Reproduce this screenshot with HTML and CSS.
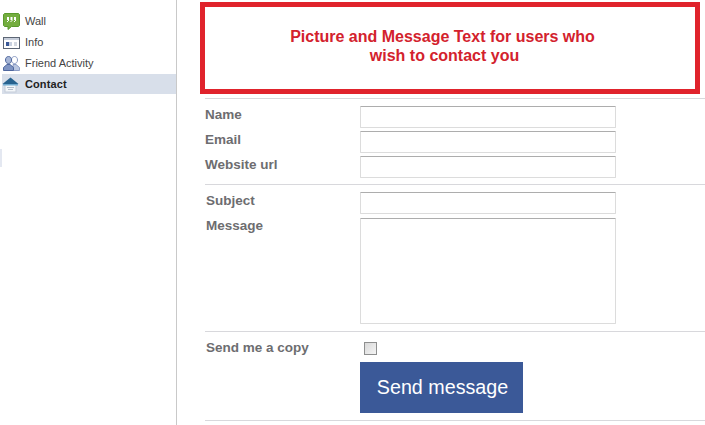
FILE: index.html
```html
<!DOCTYPE html>
<html lang="en">
  <head>
    <meta charset="UTF-8" />
    <meta name="viewport" content="width=device-width, initial-scale=1.0" />
    <title>Contact</title>
    <link rel="stylesheet" href="styles.css">
  </head>
  <body>
    <div class="page">
      <!-- Left navigation -->
      <div class="sidebar">
        <div class="nav-item">
          <svg class="nav-icon" viewBox="0 0 17 17">
            <path d="M1.500 0.500h14l1 1v11l-1 1h-7l-3.500 3v-3h-3.500l-1-1v-11z" fill="#74ad3f" stroke="#5a9a2c" />
            <path d="M4 4h2v3h-2zM7.500 4h2v3h-2zM11 4h2v3h-2z" fill="#fff" />
            <path d="M4 9l2-2M7.500 9l2-2M11 9l2-2" stroke="#fff" />
          </svg>
          <span>Wall</span>
        </div>
        <div class="nav-item">
          <svg class="nav-icon" viewBox="0 0 17 17">
            <rect x="0.500" y="3.500" width="16" height="11" fill="#fff" stroke="#5d6675" />
            <rect x="1" y="4" width="15" height="2" fill="#c7cedb" />
            <rect x="3" y="8" width="3" height="4" fill="#3b5998" />
            <rect x="6" y="8" width="3" height="4" fill="#c9d1e0" />
            <path d="M11 9h3M11 11h3" stroke="#a8b1c2" />
          </svg>
          <span>Info</span>
        </div>
        <div class="nav-item">
          <svg class="nav-icon" viewBox="0 0 17 17">
            <path d="M11.500 1.500c2 0 3 1.500 3 3.500s-1 3.500-3 3.500-3-1.500-3-3.500 1-3.500 3-3.500z" fill="#fff" stroke="#8a9bc4" />
            <path d="M10 9.500h3l3.500 3v3h-6z" fill="#b9c6e0" stroke="#8a9bc4" />
            <path d="M5.500 1.500c2 0 3 1.500 3 3.500s-1 3.500-3 3.500-3-1.500-3-3.500 1-3.500 3-3.500z" fill="#a7b6d6" stroke="#4f679e" />
            <path d="M4 9.500h3l3.500 3v3h-10v-3z" fill="#7f94c2" stroke="#4f679e" />
          </svg>
          <span>Friend Activity</span>
        </div>
        <div class="nav-item active">
          <svg class="nav-icon" viewBox="0 0 17 17">
            <rect x="3" y="8" width="11" height="8" fill="#f3f6f9" stroke="#c3ccd8" />
            <path d="M0.500 8l8-6.500 8 6.500z" fill="#27628f" />
            <rect x="1" y="8" width="15" height="1.500" fill="#6fa9cf" />
            <path d="M5 11.500h7M6 13.500h5" stroke="#b2bdcb" />
          </svg>
          <span>Contact</span>
        </div>
        <div class="side-mark"></div>
      </div>

      <div class="main">
        <div class="promo">
          <p>Picture and Message Text for users who<br /><span class="promo-second">wish to contact you</span></p>
        </div>

        <form class="contact-form">
          <div class="form-group first">
            <div class="form-row">
              <label>Name</label>
              <input class="field" type="text" />
            </div>
            <div class="form-row">
              <label>Email</label>
              <input class="field" type="text" />
            </div>
            <div class="form-row">
              <label>Website url</label>
              <input class="field" type="text" />
            </div>
          </div>

          <div class="form-group second">
            <div class="form-row subject-row">
              <label class="shifted">Subject</label>
              <input class="field" type="text" />
            </div>
            <div class="form-row message-row">
              <label class="shifted">Message</label>
              <textarea class="field message"></textarea>
            </div>
          </div>

          <div class="form-group third">
            <div class="form-row copy-row">
              <label class="shifted">Send me a copy</label>
              <span class="checkbox"></span>
            </div>
            <button class="send" type="button">Send message</button>
          </div>
        </form>
      </div>
    </div>
  </body>
</html>
```

FILE: styles.css
```css
* {
  box-sizing: border-box;
}

body {
  margin: 0;
  background: #fff;
  font-family: "Liberation Sans", Arial, sans-serif;
  overflow: hidden;
}

.page {
  display: flex;
  height: 425px;
}

.sidebar {
  width: 177px;
  flex-shrink: 0;
  padding: 11px 0 0 2px;
  border-right: 1px solid #c9c9c9;
}

.nav-item {
  display: flex;
  align-items: center;
  gap: 5px;
  height: 21px;
  padding-left: 1px;
  font-size: 11px;
  color: #444;
}

.nav-item span {
  margin-top: -2px;
}

.nav-item.active {
  height: 20px;
  padding-left: 0;
  gap: 6px;
  background: #d8dfea;
  font-weight: bold;
  letter-spacing: 0.1px;
  color: #222;
}

.nav-item.active span {
  margin-top: -1px;
}

.nav-icon {
  width: 17px;
  height: 17px;
  flex-shrink: 0;
  margin-top: -1px;
}

.nav-item.active .nav-icon {
  margin-top: 0;
}

.side-mark {
  width: 2px;
  height: 18px;
  margin: 55px 0 0 -2px;
  background: #e4e8f1;
}

.main {
  flex: 1;
  padding: 2px 0 0 23px;
}

.promo {
  display: flex;
  align-items: center;
  justify-content: center;
  width: 500px;
  height: 92px;
  padding: 0 15px 5px 0;
  border: 5px solid #e0232c;
}

.promo p {
  margin: 0;
  text-align: center;
  font-size: 16px;
  line-height: 19px;
  font-weight: bold;
  color: #d3222d;
}

.promo-second {
  padding-left: 4px;
}

.contact-form {
  margin-left: 5px;
}

.form-group {
  border-bottom: 1px solid #d8d8dc;
}

.form-group.first {
  margin-top: 4px;
  padding: 0 0 3px;
  border-top: 1px solid #d8d8dc;
}

.form-group.first .form-row:first-child {
  margin-top: 7px;
}

.form-group.second {
  padding: 7px 0 4px;
}

.form-group.third {
  padding: 6px 0 7px;
}

.form-row {
  display: flex;
  align-items: flex-start;
  margin-bottom: 3px;
}

.subject-row {
  margin-bottom: 4px;
}

.form-row label {
  width: 155px;
  padding-top: 1px;
  font-size: 13.500px;
  line-height: 16px;
  font-weight: bold;
  color: #6d6d70;
}

.form-row label.shifted {
  width: 154px;
  margin-left: 1px;
}

.message-row label {
  padding-top: 0;
}

.field {
  display: block;
  width: 256px;
  height: 22px;
  margin: 0;
  padding: 0;
  background: #fff;
  border: 1px solid #dcdcdc;
  border-top-color: #adadad;
  border-radius: 1px;
  outline: none;
  resize: none;
}

.field.message {
  height: 106px;
}

.copy-row {
  height: 17px;
  margin-bottom: 7px;
}

.copy-row label {
  padding-top: 2px;
}

.checkbox {
  display: block;
  width: 13px;
  height: 13px;
  margin: 4px 0 0 4px;
  border: 1px solid #8e8f8f;
  background: linear-gradient(135deg, #d9d9d9, #f4f4f4);
}

.send {
  display: block;
  width: 163px;
  height: 51px;
  margin: 0 0 0 155px;
  padding: 0 0 0 2px;
  border: 0;
  background: #3b5998;
  color: #fff;
  font-family: "Liberation Sans", Arial, sans-serif;
  font-size: 19.700px;
}
```
